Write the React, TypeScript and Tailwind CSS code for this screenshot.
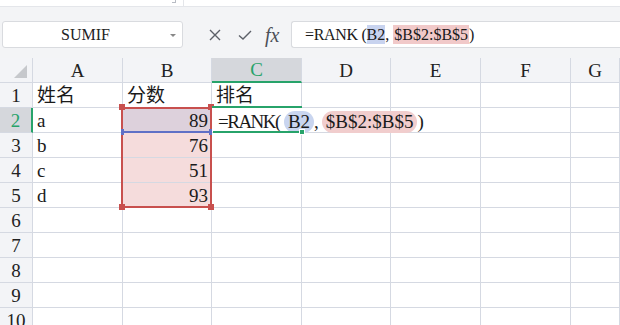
import React from "react";

const COLS = ["A", "B", "C", "D", "E", "F", "G"];
const ROWS = [1, 2, 3, 4, 5, 6, 7, 8, 9, 10];

const data: Record<string, string> = {
  A1: "姓名",
  B1: "分数",
  C1: "排名",
  A2: "a",
  B2: "89",
  A3: "b",
  B3: "76",
  A4: "c",
  B4: "51",
  A5: "d",
  B5: "93",
};

const cellFont = { fontFamily: '"Liberation Serif", "Noto Sans CJK SC", serif' };

function Handle({ className }: { className: string }) {
  return <div className={`absolute w-[6px] h-[6px] ${className}`} />;
}

function FormulaInCell() {
  return (
    <div className="flex items-center whitespace-nowrap text-[19px] text-[#1a1a1a] pl-[2px] pt-[2px]">
      <span className="tracking-[-1.5px]">=RANK(</span>
      <span className="ml-[4px] px-[4px] rounded-full bg-[#c9d5ef] leading-[22px]">B2</span>
      <span className="mr-[3px]">,</span>
      <span className="px-[4px] rounded-full bg-[#f1cdcd] leading-[22px]">$B$2:$B$5</span>
      <span>)</span>
    </div>
  );
}

function Cell({ col, row }: { col: string; row: number }) {
  const key = `${col}${row}`;
  const value = data[key];
  const isNum = col === "B" && row > 1 && row <= 5;
  let bg = "bg-white";
  if (key === "B2") bg = "bg-[#ddd1dc]";
  else if (col === "B" && row >= 3 && row <= 5) bg = "bg-[#f5dcdc]";
  const noRight = key === "C2";

  return (
    <div
      className={`h-[25px] border-b border-[#d5d9e2] ${noRight ? "" : "border-r"} ${bg} flex items-center overflow-visible pt-[2px] ${
        isNum ? "justify-end pr-[3px]" : "pl-[4px]"
      } text-[19px] text-[#1a1a1a] ${key === "C2" ? "relative z-10 pl-0" : ""}`}
      style={cellFont}
    >
      {key === "C2" ? <FormulaInCell /> : value}
    </div>
  );
}

export default function App() {
  return (
    <div className="w-[620px] h-[325px] overflow-hidden bg-white flex flex-col select-none">
      {/* top strip */}
      <div className="h-[7px] shrink-0 bg-white border-b border-[#e4e6ea] relative">
        <div className="absolute left-[172px] top-0 w-[4px] h-[3px] border-r border-b border-[#b8bcc4]" />
        <div className="absolute left-[183px] top-0 w-px h-[6px] bg-[#e4e6ea]" />
      </div>

      {/* formula toolbar */}
      <div className="h-[51px] shrink-0 bg-[#f3f4f6] flex items-start pt-[14px]">
        <div
          className="ml-[2px] w-[181px] h-[27px] bg-white border border-[#d9dbdf] rounded-[3px] flex items-center relative"
          style={cellFont}
        >
          <span className="flex-1 text-center pr-[14px] text-[16px] text-[#222]">SUMIF</span>
          <div className="absolute right-[6px] top-[12px] w-0 h-0 border-l-[3px] border-r-[3px] border-t-[3px] border-l-transparent border-r-transparent border-t-[#888]" />
        </div>
        <div className="w-[108px] h-[27px] flex items-center">
          <svg width="14" height="14" viewBox="0 0 14 14" className="ml-[25px]">
            <path d="M2 2 L12 12 M12 2 L2 12" stroke="#5c6068" strokeWidth="1.4" fill="none" />
          </svg>
          <svg width="16" height="14" viewBox="0 0 16 14" className="ml-[15px]">
            <path d="M2 7.5 L6 11 L14 3" stroke="#5c6068" strokeWidth="1.4" fill="none" />
          </svg>
          <span
            className="ml-[12px] text-[20px] italic text-[#4c5058] leading-none"
            style={{ fontFamily: '"Liberation Serif", serif' }}
          >
            fx
          </span>
        </div>
        <div
          className="flex-1 h-[27px] bg-white border border-[#d9dbdf] border-r-0 rounded-l-[3px] flex items-center pl-[13px] text-[16px] text-[#1a1a1a] whitespace-nowrap"
          style={cellFont}
        >
          <span className="tracking-[-0.3px]">=RANK (</span>
          <span className="bg-[#c8d3ef] leading-[19px]">B2</span>
          <span className="mr-[4px]">,</span>
          <span className="bg-[#f1c9c9] leading-[19px] px-[1px]">$B$2:$B$5</span>
          <span>)</span>
        </div>
      </div>

      {/* sheet grid */}
      <div className="relative flex-1">
        <div className="grid grid-cols-[33px_90px_89px_90px_89px_90px_90px_1fr]">
          {/* header row */}
          <div className="h-[25px] bg-[#f3f4f7] border-r border-b border-[#d5d9e2] relative">
            <svg width="14" height="14" viewBox="0 0 14 14" className="absolute left-[14px] top-[7px]">
              <path d="M13 0 L13 13 L0 13 Z" fill="#c6c8cc" />
            </svg>
          </div>
          {COLS.map((c) => (
            <div
              key={c}
              className={`h-[25px] flex items-center justify-center pt-[2px] text-[19px] border-r ${
                c === "C"
                  ? "bg-[#d5d7dc] text-[#27a36a] border-b-2 border-b-[#27a36a] border-r-[#d5d9e2]"
                  : "bg-[#f3f4f7] text-[#222] border-b border-[#d5d9e2]"
              }`}
              style={cellFont}
            >
              {c}
            </div>
          ))}

          {ROWS.map((r) => (
            <React.Fragment key={r}>
              <div
                className={`h-[25px] flex items-center justify-center pt-[2px] text-[19px] border-b border-[#d5d9e2] ${
                  r === 2
                    ? "bg-[#d5d7dc] text-[#27a36a] border-r-2 border-r-[#27a36a]"
                    : "bg-[#f3f4f7] text-[#222] border-r"
                }`}
                style={cellFont}
              >
                {r}
              </div>
              {COLS.map((c) => (
                <Cell key={c} col={c} row={r} />
              ))}
            </React.Fragment>
          ))}
        </div>

        {/* reference range B2:B5 */}
        <div className="absolute left-[121px] top-[49px] w-[91px] h-[101px] border-2 border-[#c8504e] pointer-events-none" />
        {/* B2 reference bottom */}
        <div className="absolute left-[123px] top-[73px] w-[87px] h-[2px] bg-[#5f70c6]" />
        <div className="absolute left-[121px] top-[71px] w-[3px] h-[6px] bg-[#5f70c6]" />
        <div className="absolute left-[209px] top-[71px] w-[3px] h-[6px] bg-[#5f70c6]" />
        <Handle className="left-[119px] top-[46px] bg-[#c8504e]" />
        <Handle className="left-[208px] top-[46px] bg-[#c8504e]" />
        <Handle className="left-[119px] top-[146px] bg-[#c8504e]" />
        <Handle className="left-[208px] top-[146px] bg-[#c8504e]" />

        {/* active cell C2 */}
        <div className="absolute left-[212px] top-[48px] w-[90px] h-[2px] bg-[#27a36a] z-20" />
        <div className="absolute left-[213px] top-[73px] w-[89px] h-[2px] bg-[#27a36a] z-20" />
        <Handle className="left-[299px] top-[71px] bg-[#27a36a] border border-white z-20" />
      </div>
    </div>
  );
}
